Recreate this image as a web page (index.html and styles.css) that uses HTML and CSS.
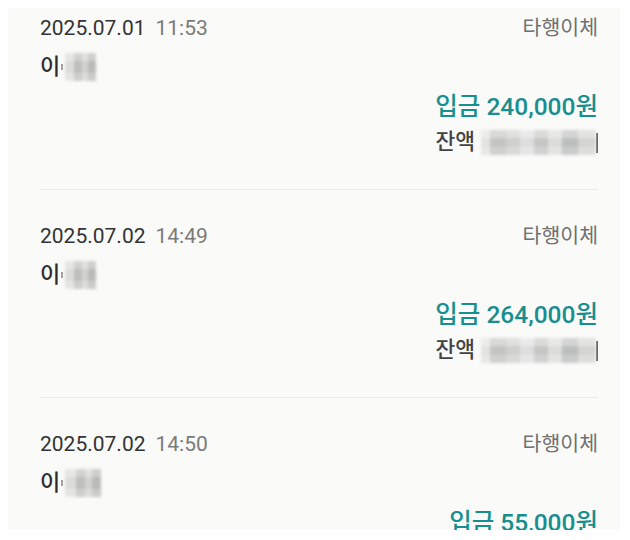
FILE: index.html
```html
<!DOCTYPE html>
<html lang="ko">
<head>
<meta charset="utf-8">
<link rel="stylesheet" href="styles.css">
</head>
<body>
<div class="list">
  <div class="entry">
    <div class="row top">
      <span class="date">2025.07.01<span class="time">11:53</span></span>
      <span class="kind">타행이체</span>
    </div>
    <div class="row name">이<span class="tick"></span><span class="blur blur-name"></span></div>
    <div class="row amount">입금 240,000원</div>
    <div class="row balance">잔액<span class="blur blur-bal"></span><span class="bar"></span></div>
  </div>
  <div class="entry">
    <div class="row top">
      <span class="date">2025.07.02<span class="time">14:49</span></span>
      <span class="kind">타행이체</span>
    </div>
    <div class="row name">이<span class="tick"></span><span class="blur blur-name"></span></div>
    <div class="row amount">입금 264,000원</div>
    <div class="row balance">잔액<span class="blur blur-bal"></span><span class="bar"></span></div>
  </div>
  <div class="entry">
    <div class="row top">
      <span class="date">2025.07.02<span class="time">14:50</span></span>
      <span class="kind">타행이체</span>
    </div>
    <div class="row name">이<span class="tick"></span><span class="blur blur-name alt"></span></div>
    <div class="row amount">입금 55,000원</div>
    <div class="row balance">잔액<span class="blur blur-bal"></span><span class="bar"></span></div>
  </div>
</div>
</body>
</html>
```
FILE: styles.css
```css
html, body {
  margin: 0;
  padding: 0;
  background: #ffffff;
}
body {
  padding: 8px;
  font-family: Roboto, "Noto Sans CJK KR", sans-serif;
}
.list {
  background: #fafaf9;
  width: 612px;
  height: 522px;
  overflow: hidden;
  box-sizing: border-box;
  padding: 0 22px 0 32px;
}
.entry {
  padding: 33px 0 34px;
  border-bottom: 1px solid #ececec;
  display: flex;
  flex-direction: column;
}
.entry:first-child {
  padding-top: 7px;
}
.row {
  height: 26px;
  line-height: 26px;
  display: flex;
  align-items: center;
  white-space: nowrap;
}
.top {
  justify-content: space-between;
}
.date {
  font-size: 21px;
  color: #333333;
}
.time {
  color: #7a7a7a;
  margin-left: 10px;
}
.kind {
  font-size: 20.5px;
  color: #707070;
}
.name {
  margin-top: 13px;
  font-size: 22px;
  font-weight: 500;
  color: #2e2e2e;
}
.tick {
  width: 2px;
  height: 6px;
  background: #777;
  margin-left: 1px;
  opacity: 0.7;
}
.blur {
  display: inline-block;
  filter: blur(1.5px);
}
.blur-name {
  width: 31px;
  height: 28px;
  margin-left: 2px;
  background:
    linear-gradient(180deg, rgba(255,255,255,0.3) 0 30%, rgba(0,0,0,0) 30% 70%, rgba(255,255,255,0.25) 70%),
    linear-gradient(90deg, #dcdcda 0 30%, #bebebb 30% 55%, #d2d2cf 55% 75%, #b9b9b7 75%);
}
.blur-name.alt {
  width: 36px;
}
.amount {
  margin-top: 14px;
  justify-content: flex-end;
  font-size: 24.5px;
  font-weight: 500;
  color: #178f8f;
}
.balance {
  margin-top: 9px;
  justify-content: flex-end;
  font-size: 21.5px;
  font-weight: 500;
  color: #444444;
}
.blur-bal {
  width: 115px;
  height: 25px;
  margin-left: 6px;
  background:
    linear-gradient(180deg, rgba(255,255,255,0.35) 0 33%, rgba(0,0,0,0) 33% 66%, rgba(255,255,255,0.2) 66%),
    linear-gradient(90deg, #e2e2e0 0 8%, #c4c4c2 8% 22%, #cfcfcd 22% 34%, #dedede 34% 46%, #c6c7c5 46% 58%, #dcdcda 58% 70%, #bbbebc 70% 84%, #d4d4d2 84% 100%);
}
.bar {
  width: 2px;
  height: 20px;
  background: #555;
  align-self: flex-end;
  margin-bottom: 2px;
}
```
